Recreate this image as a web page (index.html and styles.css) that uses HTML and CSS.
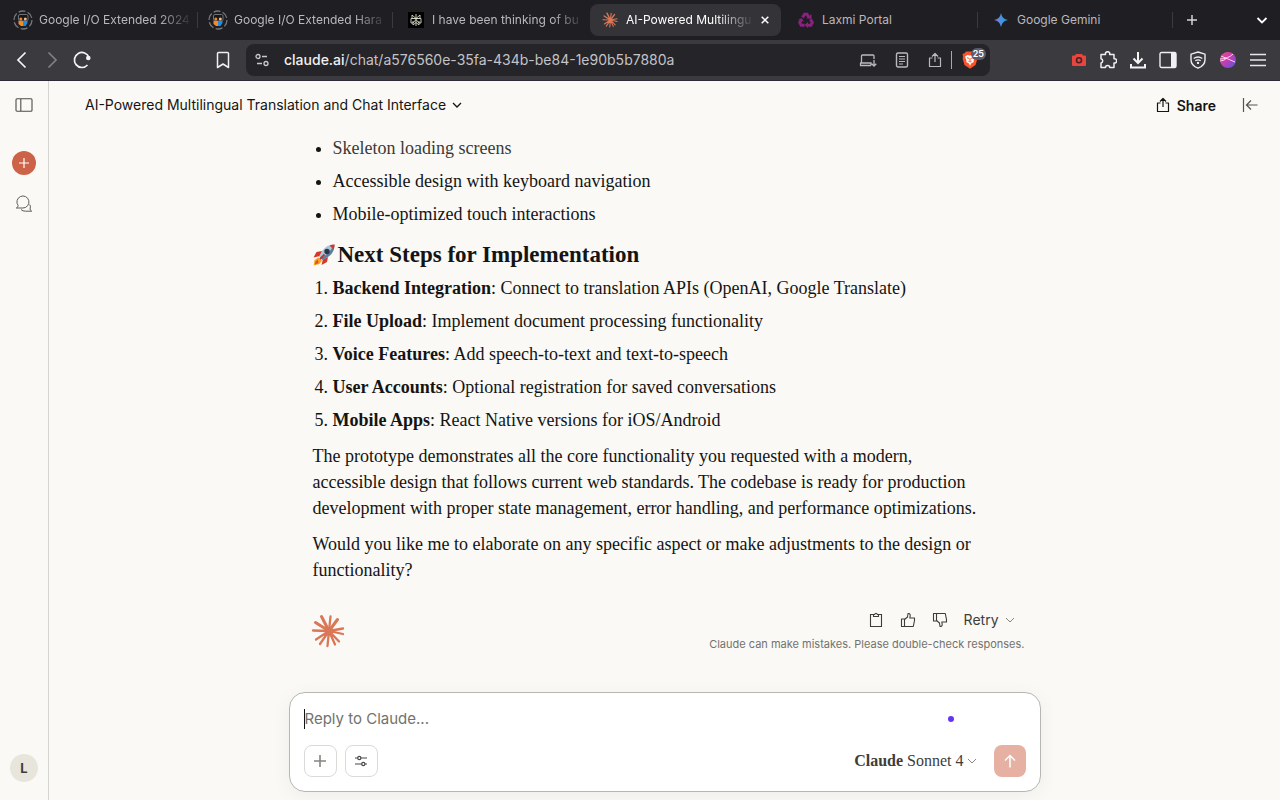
FILE: index.html
```html
<!DOCTYPE html>
<html lang="en">
<head>
<meta charset="utf-8">
<meta name="viewport" content="width=device-width, initial-scale=1">
<title>AI-Powered Multilingual Translation and Chat Interface</title>
<link rel="stylesheet" href="styles.css">
</head>
<body>
<svg width="0" height="0" class="defs" aria-hidden="true">
  <defs>
    <linearGradient id="gem" x1="0" y1="0" x2="1" y2="0"><stop offset="0" stop-color="#9b72d0"/><stop offset=".45" stop-color="#4f8fe0"/><stop offset="1" stop-color="#1aa3e8"/></linearGradient>
    <linearGradient id="ball" x1="0" y1="0" x2="1" y2="1"><stop offset="0" stop-color="#f0508a"/><stop offset=".45" stop-color="#c93bb0"/><stop offset="1" stop-color="#4a5be0"/></linearGradient>
    <symbol id="burst" viewBox="10 13 34 34">
      <g stroke="#d97757" stroke-linecap="round" fill="none">
        <path stroke-width="3" d="M28 30 20.500 15.500M28 30 36.500 18.500M28 30 14.500 21.500"/>
        <path stroke-width="2.300" d="M28 30 29.500 15.500M28 30 42 27.500M28 30 42 33M28 30 38 40.500M28 30 34 43.500M28 30 26.500 45M28 30 19 43M28 30 15 38.500M28 30 12 29.500"/>
      </g><circle cx="28" cy="30" r="4" fill="#d97757"/>
    </symbol>
    <symbol id="io" viewBox="0 0 20 20">
      <circle cx="10" cy="10" r="9" fill="none" stroke="#77767b" stroke-width="1.300" stroke-dasharray="7 2.400"/>
      <rect x="5.500" y="4.500" width="9.500" height="6.500" rx="1.500" fill="#18181b" stroke="#6b7278"/>
      <circle cx="7.800" cy="9" r="1.500" fill="#f08a2c"/><circle cx="12.300" cy="9" r="1.500" fill="#f3b98a"/>
      <path fill="#f58a24" d="M5.500 11h4.500v5H8l-2.500-2z"/><path fill="#1d8fe0" d="M10 11h4.500v2L12.500 16H10z"/>
    </symbol>
    <symbol id="chev" viewBox="0 0 10 10"><path d="M1 3l4 4 4-4" fill="none" stroke="currentColor" stroke-width="1.300"/></symbol>
    <symbol id="chev-thin" viewBox="0 0 10 10"><path d="M1 3l4 4 4-4" fill="none" stroke="#85847f" stroke-width="1"/></symbol>
    <symbol id="share" viewBox="0 0 16 16"><path d="M5.500 6H2.500v8.500h11V6h-3M8 10V1.500M5 4.500l3-3 3 3" fill="none" stroke="currentColor" stroke-width="1.200" stroke-linejoin="round"/></symbol>
    <symbol id="thumb" viewBox="0 0 16 16"><path d="M1.500 7h3v7.500h-3zM4.500 7.500 7.500 5 8 1.500h1.200q1.300.7 1 2.300L9.800 6h4.700v2.500l-1.200 6H4.500" fill="none" stroke="currentColor" stroke-width="1.100" stroke-linejoin="round"/></symbol>
  </defs>
</svg>

<nav class="tabs" aria-label="Tabs">
  <a class="tab" href="#t1"><svg width="20" height="20"><use href="#io"/></svg><span class="tab-name faded">Google I/O Extended 2024</span></a>
  <a class="tab" href="#t2"><svg width="20" height="20"><use href="#io"/></svg><span class="tab-name faded">Google I/O Extended Hara</span></a>
  <a class="tab plain" href="#t3"><svg width="16" height="16" viewBox="0 0 16 16"><path fill="#000" d="M0 0h16v16H0z"/><path d="M8 2v12M4 3l4 3.500L12 3v3.500H4zM3 6.500h10v4.500h-2L8 7.500 5 11H3zM5 9v4l3-2.500 3 2.500V9" fill="none" stroke="#d8dcc8" stroke-width=".9"/></svg><span class="tab-name faded">I have been thinking of bu</span></a>
  <div class="tab plain current"><svg width="16" height="16"><use href="#burst"/></svg><span class="tab-name faded">AI-Powered Multilingu</span><button class="close" aria-label="Close tab"><svg width="8" height="8" viewBox="0 0 8 8"><path d="M.7.7l6.600 6.600M7.300.7.700 7.300" stroke="#fff" stroke-width="1.500"/></svg></button></div>
  <a class="tab plain ruled" href="#t5"><svg width="16" height="16" viewBox="0 0 16 16"><g fill="none" stroke="#8a2080" stroke-width="3"><path d="M4.500 5.500 6.500 2.200h2.500l2 3.300M12.500 7.200l1.800 3.300-1.500 2.700H9M6.500 13.200H3.200L1.700 10.500l1.800-3"/></g><path fill="#8a2080" d="M8.500 6.500 13.500 6.800V2zM10 10v6l-3.500-3zM0 8l3.500-2L6 9.500z"/></svg><span class="tab-name">Laxmi Portal</span></a>
  <a class="tab plain ruled" href="#t6"><svg width="16" height="16" viewBox="0 0 16 16"><path d="M8 1q1 6 7 7-6 1-7 7-1-6-7-7 6-1 7-7z" fill="url(#gem)"/></svg><span class="tab-name">Google Gemini</span></a>
  <button class="bare" aria-label="New tab"><svg width="12" height="12" viewBox="0 0 12 12"><path d="M6 1v10M1 6h10" stroke="#d5d5d8" stroke-width="1.500"/></svg></button>
  <button class="bare tab-search" aria-label="Search tabs"><svg width="12" height="12" viewBox="0 0 12 12"><path d="M1.500 4 6 8.500 10.500 4" fill="none" stroke="#fff" stroke-width="1.800"/></svg></button>
</nav>

<div class="toolbar">
  <div class="nav-buttons">
    <button class="bare" aria-label="Back"><svg width="20" height="20" viewBox="0 0 20 20"><path d="M13.500 2.500 6 10l7.500 7.500" fill="none" stroke="#f4f4f5" stroke-width="1.700"/></svg></button>
    <button class="bare" aria-label="Forward"><svg width="20" height="20" viewBox="0 0 20 20"><path d="M6.500 2.500 14 10l-7.500 7.500" fill="none" stroke="#818085" stroke-width="1.700"/></svg></button>
    <button class="bare" aria-label="Reload"><svg width="20" height="20" viewBox="0 0 20 20"><path d="M15.500 15A7.500 7.500 0 1 1 17 7.500" fill="none" stroke="#f4f4f5" stroke-width="1.700"/><circle cx="16.300" cy="8" r="2.300" fill="#f4f4f5"/></svg></button>
  </div>
  <button class="bare bookmark" aria-label="Bookmark"><svg width="16" height="20" viewBox="0 0 16 20"><path d="M2.500 3.500q0-1 1-1h9q1 0 1 1v14L8 14l-5.500 3.500z" fill="none" stroke="#f0f0f2" stroke-width="1.500" stroke-linejoin="round"/></svg></button>
  <div class="address">
    <button class="bare" aria-label="Site settings"><svg width="14" height="14" viewBox="0 0 14 14"><g fill="none" stroke="#c9c9cd" stroke-width="1.300"><circle cx="3" cy="3.500" r="2"/><path d="M7 3.500h5M2 10.500h5"/><circle cx="11" cy="10.500" r="2"/></g></svg></button>
    <p class="url"><b>claude.ai</b>/chat/a576560e-35fa-434b-be84-1e90b5b7880a</p>
    <div class="address-actions">
      <button class="bare" aria-label="Install app"><svg width="18" height="16" viewBox="0 0 18 16"><path d="M2.500 11V4q0-1 1-1h10.500q1 0 1 1v3M1 13.500h11M1 11h11v2.500M1.500 11v2.500M15 8v6M12.700 11.700 15 14l2.300-2.300" fill="none" stroke="#b9b9be" stroke-width="1.300"/></svg></button>
      <button class="bare" aria-label="Reader view"><svg width="14" height="18" viewBox="0 0 14 18"><rect x="1.500" y="2" width="11" height="14" rx="1.500" fill="none" stroke="#b9b9be" stroke-width="1.400"/><path d="M4 5.500h6M4 8h6M4 10.500h6M4 13h4" stroke="#b9b9be" stroke-width="1.200"/></svg></button>
      <button class="bare pale" aria-label="Share page"><svg width="16" height="16"><use href="#share"/></svg></button>
    </div>
    <button class="bare shield" aria-label="Brave Shields"><svg width="16" height="18" viewBox="0 0 16 18"><path fill="#fb542b" d="M4 .5h8l1.500 1.700 2 .8-.5 2.500.3 2.500-1.800 6L8 17.700 2.500 14 .7 8 1 5.500.5 3l2-.8z"/><path fill="#fff" d="M3 5.500 5.500 4 8 4.500 10.500 4 13 5.500l-1.500 4 .3 1.500L9 12.500 8 15l-1-2.500L4.200 11l.3-1.500z"/><path d="M5 6.800l2 .5M11 6.800l-2 .5M8 7v3M6.500 10.300 8 11l1.500-.7" stroke="#fb542b" stroke-width="1" fill="none"/></svg><span class="count">25</span></button>
  </div>
  <div class="extensions">
    <button class="bare" aria-label="Screen capture"><svg width="16" height="16" viewBox="0 0 16 16"><path fill="#e8453c" d="M5 2h6l1 1.500h2q1 0 1 1V13q0 1-1 1H2q-1 0-1-1V4.500q0-1 1-1h2z"/><circle cx="8" cy="8.300" r="2.500" fill="none" stroke="#4a2226" stroke-width="1.600"/></svg></button>
    <button class="bare" aria-label="Extensions"><svg width="18" height="18" viewBox="0 0 18 18"><path d="M2 3.500h4.500a2.200 2.200 0 1 1 4.200 0H15v4.200a2.200 2.200 0 1 1 0 4.300v4.500h-4.300a2.100 2.100 0 0 0-4.200 0H2V12a2.200 2.200 0 0 0 0-4.300z" fill="none" stroke="#f0f0f2" stroke-width="1.500" stroke-linejoin="round"/></svg></button>
    <button class="bare" aria-label="Downloads"><svg width="18" height="18" viewBox="0 0 18 18"><path d="M9 1v11M4.500 7.500 9 12l4.500-4.500M2 13v3.500h14V13" fill="none" stroke="#f4f4f5" stroke-width="2"/></svg></button>
    <button class="bare" aria-label="Side panel"><svg width="18" height="18" viewBox="0 0 18 18"><rect x="1" y="1.500" width="16" height="15" rx="1.500" fill="none" stroke="#f0f0f2" stroke-width="1.400"/><path fill="#f0f0f2" d="M12 2h5v14h-5z"/></svg></button>
    <button class="bare" aria-label="VPN"><svg width="18" height="18" viewBox="0 0 18 18"><path d="M9 1l7 2.200v5.500Q16 14.500 9 17.200 2 14.500 2 8.700V3.200z" fill="none" stroke="#f0f0f2" stroke-width="1.400"/><path d="M4.700 7.500q4.300-3 8.600 0M6.300 9.800q2.700-1.800 5.400 0" fill="none" stroke="#f0f0f2" stroke-width="1.300"/><circle cx="9" cy="11.900" r="1.200" fill="#f0f0f2"/></svg></button>
    <button class="bare" aria-label="Profile"><svg width="18" height="18" viewBox="0 0 18 18"><circle cx="9" cy="9" r="8" fill="url(#ball)"/><path d="M1 8q8 0 13-5M2 5l14 6M1 10q4 0 7-3" stroke="#fbd5ef" fill="none"/></svg></button>
    <button class="bare" aria-label="Menu"><svg width="18" height="18" viewBox="0 0 18 18"><path d="M1 3.500h16M1 9h16M1 14.500h16" stroke="#e8e8ea" stroke-width="1.500"/></svg></button>
  </div>
</div>

<div class="app">
  <aside class="rail">
    <button class="bare" aria-label="Open sidebar"><svg width="18" height="14" viewBox="0 0 18 14"><rect x="1" y=".8" width="16" height="12.400" rx="1" fill="none" stroke="#4d4c48" stroke-width="1.100"/><path d="M5.800 1v12" stroke="#4d4c48" stroke-width="1.100"/></svg></button>
    <button class="bare new-chat" aria-label="New chat"><svg width="12" height="12" viewBox="0 0 12 12"><path d="M6 1v10M1 6h10" stroke="#fff" stroke-width="1.200"/></svg></button>
    <button class="bare" aria-label="Chats"><svg width="18" height="18" viewBox="0 0 18 18"><path d="M2 12.500q1.300-.8 1.200-1.800A6 6 0 1 1 8 13H1.300zM14.800 9.500q1.200 2.500.2 4.500.2 1.300 1.700 2.200h-6q-3 .2-4.700-1.700" fill="none" stroke="#5d5c58" stroke-width="1" stroke-linejoin="round"/></svg></button>
    <button class="bare avatar" aria-label="Account">L</button>
  </aside>

  <main class="main">
    <header class="header">
      <button class="bare title">AI-Powered Multilingual Translation and Chat Interface<svg width="10" height="10"><use href="#chev"/></svg></button>
      <button class="bare share"><svg width="16" height="16"><use href="#share"/></svg>Share</button>
      <button class="bare" aria-label="Show panel"><svg width="16" height="16" viewBox="0 0 16 16"><path d="M1.500 1v14M15.500 8H4.500M9 3.500 4.500 8 9 12.500" fill="none" stroke="#55544f" stroke-width="1.200"/></svg></button>
    </header>

    <section class="thread">
      <article class="message">
        <ul class="list">
          <li class="fading">Skeleton loading screens</li>
          <li>Accessible design with keyboard navigation</li>
          <li>Mobile-optimized touch interactions</li>
        </ul>
        <h2 class="heading"><svg width="22" height="22" viewBox="0 0 22 22" role="img" aria-label="rocket"><path fill="#d9352b" d="M9 7 3.500 8 .5 13.500 7 12zM15 13l-1 5-5.500 3L10 15z"/><path fill="#f4a81f" d="M5.500 13.500 1.500 16 .7 21.500 6.500 20 9 16.500z"/><path fill="#f0472b" d="M5 15.500 2.500 17.500 2 20.500 5.500 19z"/><path fill="#a9c5d6" d="M21.500.5q-8 0-12 6L6 12.500 9.500 16l6-3.500q6-4 6-12z"/><path fill="#5d7f99" d="M21.500.5q0 8-6 12L9.500 16 8 14.500Q16 10 21.500.5z"/><path fill="#d9352b" d="M21.500.5q-3 0-5 1l4 4q1-2 1-5z"/><circle cx="14" cy="7.500" r="2.700" fill="#27384c"/><path d="M7 15l4.500-4.500" stroke="#c62d2a" stroke-width="1.800"/></svg>Next Steps for Implementation</h2>
        <ol class="list">
          <li><strong>Backend Integration</strong>: Connect to translation APIs (OpenAI, Google Translate)</li>
          <li><strong>File Upload</strong>: Implement document processing functionality</li>
          <li><strong>Voice Features</strong>: Add speech-to-text and text-to-speech</li>
          <li><strong>User Accounts</strong>: Optional registration for saved conversations</li>
          <li><strong>Mobile Apps</strong>: React Native versions for iOS/Android</li>
        </ol>
        <p>The prototype demonstrates all the core functionality you requested with a modern,<br>accessible design that follows current web standards. The codebase is ready for production<br>development with proper state management, error handling, and performance optimizations.</p>
        <p>Would you like me to elaborate on any specific aspect or make adjustments to the design or functionality?</p>
      </article>
      <footer class="message-footer">
        <svg width="34" height="34" role="img" aria-label="Claude"><use href="#burst"/></svg>
        <div class="footer-side">
          <div class="actions">
            <button class="bare" aria-label="Copy"><svg width="16" height="16" viewBox="0 0 16 16"><path d="M5.500 2.500h-3v12h11v-12h-3M5.500 4.500h5v-2H9.300q-.2-1.300-1.300-1.300T6.700 2.500H5.500z" fill="none" stroke="currentColor" stroke-width="1.100"/></svg></button>
            <button class="bare" aria-label="Good response"><svg width="16" height="16"><use href="#thumb"/></svg></button>
            <button class="bare" aria-label="Bad response"><svg width="16" height="16" viewBox="0 0 16 16"><use href="#thumb" transform="translate(0 16) scale(1 -1)"/></svg></button>
            <button class="bare retry">Retry<svg width="10" height="10"><use href="#chev-thin"/></svg></button>
          </div>
          <p class="note">Claude can make mistakes. Please double-check responses.</p>
        </div>
      </footer>
    </section>

    <form class="composer">
      <div class="prompt-row">
        <input class="prompt" type="text" aria-label="Message" placeholder="Reply to Claude...">
        <span class="dot"></span>
      </div>
      <div class="tools">
        <button class="tool" type="button" aria-label="Add"><svg width="14" height="14" viewBox="0 0 14 14"><path d="M7 1v12M1 7h12" stroke="#85847f" stroke-width="1.600"/></svg></button>
        <button class="tool" type="button" aria-label="Tools"><svg width="14" height="12" viewBox="0 0 14 12"><g fill="none" stroke="#4a4945" stroke-width="1.200"><path d="M1 3h2.700M6.900 3H13M1 9h6.700M11 9h2"/><circle cx="5.300" cy="3" r="1.600"/><circle cx="9.300" cy="9" r="1.600"/></g></svg></button>
        <button class="bare model" type="button"><span><b>Claude</b> Sonnet 4</span><svg width="10" height="10"><use href="#chev-thin"/></svg></button>
        <button class="send" type="button" aria-label="Send"><svg width="14" height="14" viewBox="0 0 14 14"><path d="M7 13.500V1.500M2 6.500l5-5 5 5" fill="none" stroke="#fff" stroke-width="1.500"/></svg></button>
      </div>
    </form>
  </main>
</div>
</body>
</html>
```
FILE: styles.css
```css
* { box-sizing: border-box; }
body {
  margin: 0;
  height: 100vh;
  display: flex;
  flex-direction: column;
  overflow: hidden;
  background: #faf9f5;
  color: #141413;
  font-family: Inter, "Liberation Sans", sans-serif;
  font-size: 14px;
}
p, h2, ul, ol { margin: 0; }
svg { display: block; flex: none; }
.defs { position: absolute; }
.bare {
  display: flex;
  align-items: center;
  justify-content: center;
  padding: 0;
  border: 0;
  background: none;
  color: inherit;
  font: inherit;
}

/* Browser tabs */
.tabs {
  display: flex;
  align-items: center;
  height: 40px;
  padding: 0 12px 0 3px;
  background: #1f1e23;
  font-size: 12px;
}
.tab {
  flex: 0 1 195px;
  min-width: 0;
  height: 32px;
  display: flex;
  align-items: center;
  gap: 6px;
  padding: 0 4px 0 10px;
  color: #b9b9bd;
  text-decoration: none;
  background: linear-gradient(#3b3a3f, #3b3a3f) right center / 1px 16px no-repeat;
}
.tab.plain { gap: 8px; padding-left: 15px; }
.tab.plain:not(.ruled) { background: none; }
.tab-name {
  flex: 1;
  white-space: nowrap;
  line-height: 20px;
}
.faded {
  -webkit-mask-image: linear-gradient(90deg, #000 120px, transparent 154px);
  mask-image: linear-gradient(90deg, #000 120px, transparent 154px);
}
.tab.plain.current {
  flex-basis: 191px;
  margin: 0 2px;
  border-radius: 8px;
  padding: 0 10px 0 12px;
  background: #343338;
  color: #fff;
}
.current .faded {
  -webkit-mask-image: linear-gradient(90deg, #000 90px, transparent 128px);
  mask-image: linear-gradient(90deg, #000 90px, transparent 128px);
}
.close { padding: 2px; border: 0; background: none; }
.tabs > .bare { width: 24px; height: 24px; margin-left: 7px; }
.tabs > .tab-search { width: 12px; margin-left: auto; }

/* Browser toolbar */
.toolbar {
  display: flex;
  align-items: center;
  height: 41px;
  padding: 0 13px 0 12px;
  background: #3b3a3f;
  border-bottom: 1px solid #2f2935;
}
.nav-buttons { display: flex; gap: 10px; margin-right: 42px; }
.bookmark { margin-left: auto; }
.address {
  flex: 0 1 744px;
  min-width: 0;
  display: flex;
  align-items: center;
  height: 32px;
  margin: 0 auto 0 15px;
  padding: 0 4px 0 9px;
  border-radius: 8px;
  background: #252429;
}
.url {
  flex: 1;
  min-width: 0;
  margin-left: 15px;
  overflow: hidden;
  white-space: nowrap;
  color: #c3c3c7;
  line-height: 20px;
}
.url b { font-weight: 500; color: #f0f0f2; }
.address-actions {
  display: flex;
  align-items: center;
  gap: 18px;
  padding-right: 8px;
  border-right: 1px solid #a9a9ad;
}
.pale { color: #b9b9be; }
.shield { position: relative; width: 34px; justify-content: flex-start; padding-left: 10px; }
.count {
  position: absolute;
  top: -3px;
  right: 0;
  padding: 0 2px;
  border-radius: 6px;
  background: #5b5c69;
  color: #fff;
  font-size: 9px;
  font-weight: 600;
  line-height: 12px;
}
.extensions { display: flex; align-items: center; gap: 12px; }

/* App shell */
.app { flex: 1; min-height: 0; display: flex; }
.rail {
  width: 49px;
  display: flex;
  flex-direction: column;
  align-items: center;
  padding: 17px 0 18px;
  border-right: 1px solid #d5d4d0;
}
.new-chat {
  width: 24px;
  height: 24px;
  margin: 39px 0 20px;
  border-radius: 50%;
  background: #cc6247;
}
.avatar {
  width: 28px;
  height: 28px;
  margin-top: auto;
  border-radius: 50%;
  background: #e8e6dc;
  color: #3d3d3a;
  font-size: 13px;
  font-weight: 700;
}
.main {
  flex: 1;
  min-width: 0;
  display: flex;
  flex-direction: column;
  padding-bottom: 8px;
}
.header {
  display: flex;
  align-items: center;
  height: 48px;
  padding: 0 22px 0 36px;
}
.title { gap: 6px; line-height: 20px; }
.share { gap: 6px; margin: 0 26px 0 auto; font-weight: 600; }

/* Conversation */
.thread {
  flex: 1;
  min-height: 0;
  overflow: hidden;
  width: 100%;
  max-width: 752px;
  margin: 0 auto;
  padding: 6px 16px 0 24px;
}
.message {
  max-width: 688px;
  font-family: "Liberation Serif", serif;
  font-size: 18px;
  line-height: 26px;
}
.list {
  display: flex;
  flex-direction: column;
  gap: 7px;
  padding-left: 20px;
}
.fading { color: #3a3a37; }
.fading::marker { color: #141413; }
.heading {
  display: flex;
  align-items: center;
  gap: 3px;
  margin: 14px 0 6px;
  font-size: 23px;
  line-height: 28px;
}
.message p { margin-top: 10px; }
.message-footer {
  display: flex;
  align-items: center;
  justify-content: space-between;
  margin: 27px 0 0 -2px;
}
.actions {
  display: flex;
  align-items: center;
  justify-content: flex-end;
  gap: 16px;
  margin-right: 10px;
  color: #3d3d3a;
}
.retry { gap: 6px; line-height: 20px; }
.note {
  margin-top: 6px;
  color: #73726c;
  font-size: 11px;
  line-height: 16px;
}

/* Composer */
.composer {
  width: calc(100% - 16px);
  max-width: 752px;
  margin: 0 auto;
  padding: 16px 14px 14px;
  border: 1px solid #b7b6b3;
  border-radius: 16px;
  background: #fff;
  box-shadow: 0 4px 20px rgba(0, 0, 0, .05);
}
.prompt-row { display: flex; align-items: center; padding-right: 72px; }
.prompt {
  flex: 1;
  min-width: 0;
  height: 20px;
  padding: 0;
  border: 0;
  border-left: 1px solid #141413;
  outline: 0;
  background: none;
  font: 15px/20px Inter, "Liberation Sans", sans-serif;
}
.prompt::placeholder { color: #73726c; opacity: 1; }
.dot { width: 6px; height: 6px; border-radius: 50%; background: #6633f5; }
.tools { display: flex; align-items: center; gap: 8px; margin-top: 16px; }
.tool, .send {
  display: grid;
  place-items: center;
  width: 33px;
  height: 32px;
  padding: 0;
  border: 1px solid #dbdad7;
  border-radius: 8px;
  background: #fff;
}
.send { width: 32px; border: 0; background: #e6b0a2; }
.model {
  gap: 3px;
  margin: 0 9px 0 auto;
  color: #3d3d3a;
  font: 16px/20px "Liberation Serif", serif;
}
.model b { font-weight: 600; }
```
